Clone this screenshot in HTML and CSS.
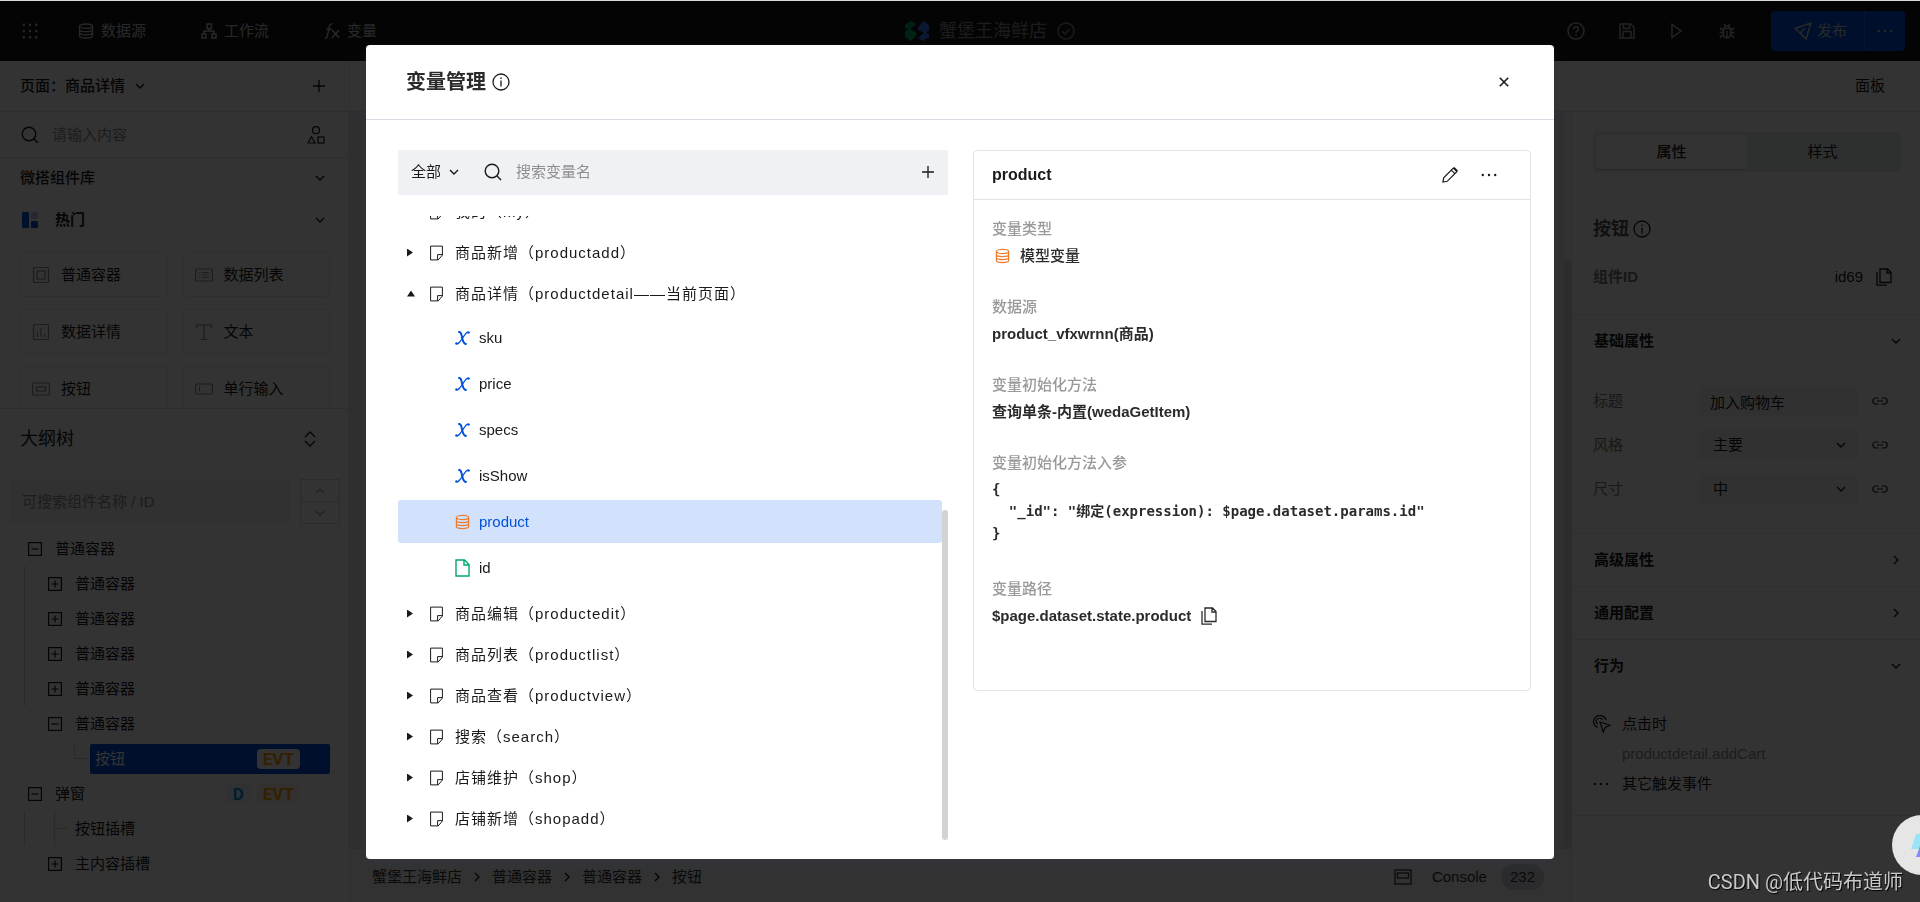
FILE: index.html
```html
<!DOCTYPE html>
<html lang="zh-CN">
<head>
<meta charset="utf-8">
<title>变量管理</title>
<link rel="stylesheet" href="styles.css">
</head>
<body>
<svg class="sprite" aria-hidden="true">
  <symbol id="i-db" viewBox="0 0 16 16"><g fill="none" stroke="currentColor" stroke-width="1.3"><ellipse cx="8" cy="3.2" rx="6.5" ry="2.2"/><path d="M1.5 3.2v9.6c0 1.2 2.9 2.2 6.5 2.2s6.500-1 6.500-2.200V3.200M1.500 6.400c0 1.200 2.900 2.200 6.500 2.200s6.500-1 6.500-2.200M1.500 9.600c0 1.200 2.900 2.200 6.500 2.200s6.500-1 6.500-2.200"/></g></symbol>
  <symbol id="i-flow" viewBox="0 0 16 16"><g fill="none" stroke="currentColor" stroke-width="1.500"><rect x="6" y="1" width="4.500" height="4.500"/><rect x="1" y="11" width="4" height="4"/><rect x="11" y="11" width="4" height="4"/><path d="M8.200 5.500v2.500M3 11V8h10v3"/></g></symbol>
  <symbol id="i-fx" viewBox="0 0 18 18"><g fill="none" stroke="currentColor" stroke-width="1.600"><path d="M9.500 1.200C7.500.6 6.500 1.700 6.100 3.500L3.800 14.500C3.400 16.500 2.500 17.200.8 16.700M2.500 7h6M9 8l8 8.500M17 8l-8 8.500"/></g></symbol>
  <symbol id="i-dots9" viewBox="0 0 16 16"><g fill="currentColor"><circle cx="1.800" cy="1.800" r="1.200"/><circle cx="8" cy="1.800" r="1.200"/><circle cx="14.200" cy="1.800" r="1.200"/><circle cx="1.800" cy="8" r="1.200"/><circle cx="8" cy="8" r="1.200"/><circle cx="14.200" cy="8" r="1.200"/><circle cx="1.800" cy="14.200" r="1.200"/><circle cx="8" cy="14.200" r="1.200"/><circle cx="14.200" cy="14.200" r="1.200"/></g></symbol>
  <symbol id="i-dots" viewBox="0 0 16 16"><g fill="currentColor"><circle cx="1.800" cy="8" r="1.200"/><circle cx="8" cy="8" r="1.200"/><circle cx="14.200" cy="8" r="1.200"/></g></symbol>
  <symbol id="i-check" viewBox="0 0 18 18"><g fill="none" stroke="currentColor" stroke-width="1.500"><circle cx="9" cy="9" r="8"/><path d="M5.200 9.200l2.800 2.700 4.800-5"/></g></symbol>
  <symbol id="i-help" viewBox="0 0 18 18"><g fill="none" stroke="currentColor" stroke-width="1.500"><circle cx="9" cy="9" r="8"/><path d="M6.600 7.200c0-3.300 4.900-3 4.900-.2C11.500 8.800 9 8.800 9 10.800M9 12.200v1.500"/></g></symbol>
  <symbol id="i-save" viewBox="0 0 16 16"><g fill="none" stroke="currentColor" stroke-width="1.500"><path d="M1 1h10.500L15 4.500V15H1zM4.500 1v4.500h6V1M4 15V8.500h8V15"/></g></symbol>
  <symbol id="i-play" viewBox="0 0 16 16"><path d="M3 1.500v13L12 8z" fill="none" stroke="currentColor" stroke-width="1.500"/></symbol>
  <symbol id="i-bug" viewBox="0 0 16 16"><g fill="none" stroke="currentColor" stroke-width="1.400"><path d="M4.500 5.500h7v5.500c0 5-7 5-7 0zM5.500 5.500c0-3.500 5-3.500 5 0M8 8v6.500M.5 9.500h4M11.500 9.500h4M1.500 4.500c0 2 1 2.500 3 2.500M14.500 4.500c0 2-1 2.500-3 2.500M1.500 15c0-2 1-3 3-3M14.500 15c0-2-1-3-3-3M5 .8l1.500 2M11 .8l-1.500 2"/></g></symbol>
  <symbol id="i-plane" viewBox="0 0 18 18"><path d="M1 6.500L17 1l-5 16-4.500-4.500zM7.500 12.500l-.2-3 4-3" fill="none" stroke="currentColor" stroke-width="1.500" stroke-linejoin="round"/></symbol>
  <symbol id="i-down" viewBox="0 0 10 10"><path d="M1 3l4 4 4-4" fill="none" stroke="currentColor" stroke-width="1.400"/></symbol>
  <symbol id="i-up" viewBox="0 0 10 10"><path d="M1 7l4-4 4 4" fill="none" stroke="currentColor" stroke-width="1.400"/></symbol>
  <symbol id="i-right" viewBox="0 0 10 10"><path d="M3 1l4 4-4 4" fill="none" stroke="currentColor" stroke-width="1.400"/></symbol>
  <symbol id="i-plus" viewBox="0 0 12 12"><path d="M6 0v12M0 6h12" fill="none" stroke="currentColor" stroke-width="1.300"/></symbol>
  <symbol id="i-search" viewBox="0 0 18 18"><g fill="none" stroke="currentColor" stroke-width="1.400"><circle cx="8" cy="8" r="6.800"/><path d="M12.800 12.800l4.200 4.200"/></g></symbol>
  <symbol id="i-shapes" viewBox="0 0 18 18"><g fill="none" stroke="currentColor" stroke-width="1.200"><circle cx="9" cy="4.200" r="3.500"/><path d="M1 17l3.500-6.200L8 17z"/><rect x="11" y="11" width="6" height="6"/></g></symbol>
  <symbol id="i-hot" viewBox="0 0 16 16"><rect width="7" height="16" rx="1" fill="#0052d9"/><rect x="9" width="7" height="7" rx="1" fill="#bcc8e8"/><rect x="9" y="9" width="7" height="7" rx="1" fill="#0052d9"/></symbol>
  <symbol id="i-box" viewBox="0 0 18 18"><g fill="none" stroke="currentColor" stroke-width="1.200"><rect x="1.500" y="1.500" width="15" height="15" rx="1"/><rect x="5" y="5" width="8" height="8"/></g></symbol>
  <symbol id="i-list" viewBox="0 0 18 18"><g fill="none" stroke="currentColor" stroke-width="1.200"><rect x=".6" y="3" width="16.800" height="12" rx="1"/><path d="M4 6.500h1.500M7 6.500h7M4 9h1.500M7 9h7M4 11.500h1.500M7 11.500h7"/></g></symbol>
  <symbol id="i-chart" viewBox="0 0 18 18"><g fill="none" stroke="currentColor" stroke-width="1.200"><rect x="1.500" y="1.500" width="15" height="15" rx="1"/><path d="M5.500 8v6M9 5v9M12.500 10.500V14"/></g></symbol>
  <symbol id="i-text" viewBox="0 0 18 18"><path d="M1.500 5V2h15v3M9 2v14.500M5.500 16.500h7" fill="none" stroke="currentColor" stroke-width="1.200"/></symbol>
  <symbol id="i-btn" viewBox="0 0 18 18"><g fill="none" stroke="currentColor" stroke-width="1.200"><rect x=".6" y="3" width="16.800" height="12" rx="1"/><rect x="4.500" y="7" width="9" height="4"/></g></symbol>
  <symbol id="i-input" viewBox="0 0 18 18"><g fill="none" stroke="currentColor" stroke-width="1.200"><rect x=".6" y="4" width="16.800" height="10" rx="1"/><path d="M4.500 6.500v5"/></g></symbol>
  <symbol id="i-updown" viewBox="0 0 12 16"><path d="M1 6l5-5 5 5M1 10l5 5 5-5" fill="none" stroke="currentColor" stroke-width="1.400"/></symbol>
  <symbol id="i-minusbox" viewBox="0 0 14 14"><g fill="none" stroke="currentColor" stroke-width="1.200"><rect x=".6" y=".6" width="12.800" height="12.800"/><path d="M3.500 7h7"/></g></symbol>
  <symbol id="i-plusbox" viewBox="0 0 14 14"><g fill="none" stroke="currentColor" stroke-width="1.200"><rect x=".6" y=".6" width="12.800" height="12.800"/><path d="M3.500 7h7M7 3.500v7"/></g></symbol>
  <symbol id="i-info" viewBox="0 0 18 18"><g fill="none" stroke="currentColor" stroke-width="1.300"><circle cx="9" cy="9" r="8"/><path d="M9 7.500V13.500M9 4.500v1.500"/></g></symbol>
  <symbol id="i-copy" viewBox="0 0 16 18"><path d="M4 1h7.500L15 4.500V14.500H4zM11 1v4h4M1 4v13.200h10" fill="none" stroke="currentColor" stroke-width="1.300"/></symbol>
  <symbol id="i-link" viewBox="0 0 16 8"><path d="M6.500 1H3.800a3 3 0 0 0 0 6h2.700M9.500 1h2.700a3 3 0 0 1 0 6H9.500M5 4h6" fill="none" stroke="currentColor" stroke-width="1.200"/></symbol>
  <symbol id="i-click" viewBox="0 0 18 18"><g fill="none" stroke="currentColor" stroke-width="1.200"><path d="M7 7l10 3.200-4.500 2L10.200 17zM4.500 12.500A6.300 6.300 0 1 1 13 5M5 9.200A3.300 3.300 0 1 1 9.500 4.800"/></g></symbol>
  <symbol id="i-page" viewBox="0 0 13 16"><path d="M.6 1.100h11.800v9L8.200 14.900H.6zM12.400 9.600H7.600v5.300" fill="none" stroke="currentColor" stroke-width="1"/></symbol>
  <symbol id="i-x" viewBox="0 0 15 15"><g fill="none" stroke="currentColor" stroke-linecap="round"><path d="M4 1.600C6 1.200 6.300 3.500 7.100 7.200S8.700 13.600 11 13.400" stroke-width="2"/><path d="M14 1.900C11.800.9 10.300 3.300 7.600 7.500S3.200 14.100 1 13.100" stroke-width="1.200"/></g><circle cx="13.500" cy="2.100" r="1.200" fill="currentColor"/><circle cx="1.500" cy="12.900" r="1.200" fill="currentColor"/></symbol>
  <symbol id="i-file" viewBox="0 0 15 18"><path d="M1 1h8.500L14 5.500V17H1zM9 1v5h5" fill="none" stroke="currentColor" stroke-width="1.400"/></symbol>
  <symbol id="i-close" viewBox="0 0 10 10"><path d="M.8.800l8.400 8.400M9.200.8L.8 9.200" fill="none" stroke="currentColor" stroke-width="1.600"/></symbol>
  <symbol id="i-pencil" viewBox="0 0 16 16"><path d="M.9 15.100l.8-4.300L11.300 1.200l3.500 3.500L5.200 14.300zM9.300 3.200l3.500 3.500M12 .5L15.500 4" fill="none" stroke="currentColor" stroke-width="1.200"/></symbol>
  <symbol id="i-console" viewBox="0 0 18 16"><g fill="none" stroke="currentColor" stroke-width="1.300"><rect x="1" y="1" width="16" height="14"/><rect x="3.500" y="4" width="11" height="5"/></g></symbol>
</svg>

<div class="app">
  <header class="topbar">
    <button class="apps" aria-label="应用"><svg class="s16"><use href="#i-dots9"/></svg></button>
    <nav class="topnav">
      <a href="#"><svg class="s16"><use href="#i-db"/></svg>数据源</a>
      <a href="#"><svg class="s16"><use href="#i-flow"/></svg>工作流</a>
      <a href="#"><svg class="s16"><use href="#i-fx"/></svg>变量</a>
    </nav>
    <div class="app-title">
      <svg class="logo" viewBox="0 0 24 20"><path d="M0 4L6 0l5 3-6 5 5 3 1.500-.5v3.500L6 20l-6-4v-5l3-3-3-1z" fill="#00a870"/><path d="M24 16l-6 4-5-3 6-5-5-3-1 .5V7l5-7 6 4v5l-3 3 3 1z" fill="#3f7bf5"/></svg>
      <span>蟹堡王海鲜店</span>
      <svg class="s18"><use href="#i-check"/></svg>
    </div>
    <div class="top-actions">
      <button aria-label="帮助"><svg class="s18"><use href="#i-help"/></svg></button>
      <button aria-label="保存"><svg class="s16"><use href="#i-save"/></svg></button>
      <button aria-label="预览"><svg class="s16"><use href="#i-play"/></svg></button>
      <button aria-label="调试"><svg class="s16"><use href="#i-bug"/></svg></button>
    </div>
    <div class="publish">
      <button class="publish-main"><svg class="s18"><use href="#i-plane"/></svg>发布</button>
      <button class="publish-more" aria-label="更多"><svg class="s16"><use href="#i-dots"/></svg></button>
    </div>
  </header>

  <div class="toolbar">
    <div class="page-pick">
      <button class="page-name">页面：商品详情<svg class="s10"><use href="#i-down"/></svg></button>
      <button aria-label="新增页面"><svg class="s12"><use href="#i-plus"/></svg></button>
    </div>
    <button class="panel-link">面板</button>
  </div>

  <div class="workspace">
    <aside class="left">
      <div class="lib-search">
        <svg class="s18"><use href="#i-search"/></svg>
        <input type="text" placeholder="请输入内容" aria-label="搜索组件">
        <svg class="s18"><use href="#i-shapes"/></svg>
      </div>
      <section class="library">
        <h3 class="lib-head">微搭组件库<svg class="s10"><use href="#i-down"/></svg></h3>
        <h4 class="lib-head sub"><svg class="s16"><use href="#i-hot"/></svg><span class="hot">热门</span><svg class="s10"><use href="#i-down"/></svg></h4>
        <div class="cards">
          <button class="card"><svg class="s18"><use href="#i-box"/></svg>普通容器</button>
          <button class="card"><svg class="s18"><use href="#i-list"/></svg>数据列表</button>
          <button class="card"><svg class="s18"><use href="#i-chart"/></svg>数据详情</button>
          <button class="card"><svg class="s18"><use href="#i-text"/></svg>文本</button>
          <button class="card"><svg class="s18"><use href="#i-btn"/></svg>按钮</button>
          <button class="card"><svg class="s18"><use href="#i-input"/></svg>单行输入</button>
        </div>
      </section>
      <section class="outline">
        <h3 class="outline-head">大纲树<svg class="updown"><use href="#i-updown"/></svg></h3>
        <div class="outline-search">
          <input type="text" placeholder="可搜索组件名称 / ID" aria-label="搜索大纲">
          <div class="stepper">
            <button aria-label="上一个"><svg class="s10"><use href="#i-up"/></svg></button>
            <button aria-label="下一个"><svg class="s10"><use href="#i-down"/></svg></button>
          </div>
        </div>
        <ul class="otree">
          <li class="l1"><svg class="s14"><use href="#i-minusbox"/></svg>普通容器</li>
          <li class="l2"><i class="guide"></i><svg class="s14"><use href="#i-plusbox"/></svg>普通容器</li>
          <li class="l2"><i class="guide"></i><svg class="s14"><use href="#i-plusbox"/></svg>普通容器</li>
          <li class="l2"><i class="guide"></i><svg class="s14"><use href="#i-plusbox"/></svg>普通容器</li>
          <li class="l2"><i class="guide"></i><svg class="s14"><use href="#i-plusbox"/></svg>普通容器</li>
          <li class="l2"><i class="guide none"></i><svg class="s14"><use href="#i-minusbox"/></svg>普通容器</li>
          <li class="l3"><i class="elbow"></i><div class="picked"><span>按钮</span><b class="evt light">EVT</b></div></li>
          <li class="l1"><svg class="s14"><use href="#i-minusbox"/></svg><span>弹窗</span><b class="dtag">D</b><b class="evt">EVT</b></li>
          <li class="l2"><i class="guide wide"></i><i class="branch"></i>按钮插槽</li>
          <li class="l2"><i class="guide none"></i><svg class="s14"><use href="#i-plusbox"/></svg>主内容插槽</li>
        </ul>
      </section>
    </aside>

    <main class="center">
      <div class="canvas"><div class="canvas-scroll"></div></div>
      <footer class="crumbs">
        <a href="#">蟹堡王海鲜店</a><svg class="s10"><use href="#i-right"/></svg>
        <a href="#">普通容器</a><svg class="s10"><use href="#i-right"/></svg>
        <a href="#">普通容器</a><svg class="s10"><use href="#i-right"/></svg>
        <a href="#">按钮</a>
        <button class="console"><svg class="s18"><use href="#i-console"/></svg>Console<span class="count">232</span></button>
      </footer>
    </main>

    <aside class="right">
      <div class="tabs"><button class="tab on">属性</button><button class="tab">样式</button></div>
      <h2 class="comp">按钮<svg class="s18"><use href="#i-info"/></svg></h2>
      <div class="comp-id"><strong>组件ID</strong><span>id69</span><button aria-label="复制"><svg class="copy"><use href="#i-copy"/></svg></button></div>
      <section class="group">
        <h3>基础属性<svg class="s10"><use href="#i-down"/></svg></h3>
        <div class="fields">
          <label for="f1">标题</label><input id="f1" type="text" value="加入购物车"><button aria-label="绑定标题"><svg class="link"><use href="#i-link"/></svg></button>
          <label for="f2">风格</label><span class="sel"><select id="f2"><option>主要</option></select><svg class="s10"><use href="#i-down"/></svg></span><button aria-label="绑定风格"><svg class="link"><use href="#i-link"/></svg></button>
          <label for="f3">尺寸</label><span class="sel"><select id="f3"><option>中</option></select><svg class="s10"><use href="#i-down"/></svg></span><button aria-label="绑定尺寸"><svg class="link"><use href="#i-link"/></svg></button>
        </div>
      </section>
      <section class="group"><h3>高级属性<svg class="s10"><use href="#i-right"/></svg></h3></section>
      <section class="group"><h3>通用配置<svg class="s10"><use href="#i-right"/></svg></h3></section>
      <section class="group last">
        <h3>行为<svg class="s10"><use href="#i-down"/></svg></h3>
        <div class="events">
          <svg class="s18"><use href="#i-click"/></svg><span>点击时</span>
          <i></i><span class="dim">productdetail.addCart</span>
          <svg class="s16"><use href="#i-dots"/></svg><span>其它触发事件</span>
        </div>
      </section>
    </aside>
  </div>
</div>

<div class="mask">
  <div class="modal" role="dialog" aria-labelledby="dlg">
    <header class="modal-head">
      <h1 id="dlg">变量管理</h1><svg class="s18"><use href="#i-info"/></svg>
      <button class="close" aria-label="关闭"><svg class="s10"><use href="#i-close"/></svg></button>
    </header>
    <div class="modal-body">
      <section class="vars">
        <div class="var-bar">
          <span class="scope"><select aria-label="范围"><option>全部</option></select><svg class="s10"><use href="#i-down"/></svg></span>
          <svg class="s18"><use href="#i-search"/></svg>
          <input type="text" placeholder="搜索变量名" aria-label="搜索变量名">
          <button aria-label="新增变量"><svg class="s12"><use href="#i-plus"/></svg></button>
        </div>
        <div class="var-pane">
          <ul class="vtree">
            <li class="pg"><i class="tri"></i><svg class="page"><use href="#i-page"/></svg>我的（my）</li>
            <li class="pg"><i class="tri"></i><svg class="page"><use href="#i-page"/></svg>商品新增（productadd）</li>
            <li class="pg"><i class="tri open"></i><svg class="page"><use href="#i-page"/></svg>商品详情（productdetail——当前页面）</li>
            <li class="kids">
              <button class="var"><svg class="vx"><use href="#i-x"/></svg>sku</button>
              <button class="var"><svg class="vx"><use href="#i-x"/></svg>price</button>
              <button class="var"><svg class="vx"><use href="#i-x"/></svg>specs</button>
              <button class="var"><svg class="vx"><use href="#i-x"/></svg>isShow</button>
              <button class="var on"><svg class="vdb"><use href="#i-db"/></svg>product</button>
              <button class="var"><svg class="vfile"><use href="#i-file"/></svg>id</button>
            </li>
            <li class="pg"><i class="tri"></i><svg class="page"><use href="#i-page"/></svg>商品编辑（productedit）</li>
            <li class="pg"><i class="tri"></i><svg class="page"><use href="#i-page"/></svg>商品列表（productlist）</li>
            <li class="pg"><i class="tri"></i><svg class="page"><use href="#i-page"/></svg>商品查看（productview）</li>
            <li class="pg"><i class="tri"></i><svg class="page"><use href="#i-page"/></svg>搜索（search）</li>
            <li class="pg"><i class="tri"></i><svg class="page"><use href="#i-page"/></svg>店铺维护（shop）</li>
            <li class="pg"><i class="tri"></i><svg class="page"><use href="#i-page"/></svg>店铺新增（shopadd）</li>
          </ul>
          <div class="thumb"></div>
        </div>
      </section>
      <section class="detail">
        <header class="detail-head">
          <h2>product</h2>
          <button aria-label="编辑"><svg class="s16"><use href="#i-pencil"/></svg></button>
          <button aria-label="更多"><svg class="s16"><use href="#i-dots"/></svg></button>
        </header>
        <dl class="facts">
          <dt>变量类型</dt><dd class="kind"><svg class="vdb"><use href="#i-db"/></svg>模型变量</dd>
          <dt>数据源</dt><dd>product_vfxwrnn(商品)</dd>
          <dt>变量初始化方法</dt><dd>查询单条-内置(wedaGetItem)</dd>
          <dt>变量初始化方法入参</dt><dd class="code"><pre>{
  "_id": "绑定(expression): $page.dataset.params.id"
}</pre></dd>
          <dt>变量路径</dt><dd class="path">$page.dataset.state.product<button aria-label="复制路径"><svg class="copy"><use href="#i-copy"/></svg></button></dd>
        </dl>
      </section>
    </div>
  </div>
</div>

<button class="assistant" aria-label="助手"><svg viewBox="0 0 60 60"><path d="M24 19h22l-4 15H19z" fill="#9be4f7"/><path d="M27 34l2-7h20l-4 15H24z" fill="#8188fa"/></svg></button>
<div class="watermark">CSDN @低代码布道师</div>
</body>
</html>
```
FILE: styles.css
```css
* { box-sizing: border-box; margin: 0; padding: 0; }
html, body { height: 100%; overflow: hidden; }
body {
  font: 15px/20px "Liberation Sans", "Noto Sans CJK SC", sans-serif;
  color: #1a1a1a;
  background: #dcdcdc;
}
button, input, select { font: inherit; color: inherit; background: none; border: 0; outline: 0; appearance: none; }
button { display: inline-flex; align-items: center; }
a { color: inherit; text-decoration: none; }
ul { list-style: none; }
h1, h2, h3, h4 { font-size: 15px; font-weight: 500; }
input { min-width: 0; }
svg { flex: none; display: block; }
.sprite { position: absolute; width: 0; height: 0; }
.s10 { width: 10px; height: 10px; }
.s12 { width: 12px; height: 12px; }
.s14 { width: 14px; height: 14px; }
.s16 { width: 16px; height: 16px; }
.s18 { width: 18px; height: 18px; }

.app { height: 100%; padding-top: 1px; display: flex; flex-direction: column; }

/* top bar */
.topbar { flex: none; height: 60px; display: flex; align-items: center; padding: 0 15px 0 22px; background: #171717; color: #c8c8c8; }
.topnav { display: flex; gap: 55px; margin-left: 40px; }
.topnav a { display: flex; align-items: center; gap: 7px; }
.app-title { display: flex; align-items: center; gap: 10px; margin: 0 auto; font-size: 18px; color: #8a8a8a; padding-left: 36px; }
.logo { width: 24px; height: 20px; }
.top-actions { display: flex; gap: 34px; margin-right: 36px; color: #b0b0b0; }
.publish { display: flex; height: 40px; border-radius: 4px; background: #0052d9; overflow: hidden; }
.publish-main { gap: 5px; padding: 0 17px 0 23px; }
.publish-more { padding: 0 12px; border-left: 1px solid #2b6ee0; }

/* page toolbar */
.toolbar { flex: none; height: 51px; display: flex; justify-content: space-between; background: #fff; border-bottom: 1px solid #e4e4e4; }
.page-pick { width: 350px; display: flex; align-items: center; justify-content: space-between; padding: 0 24px 0 20px; border-right: 1px solid #e8e8e8; }
.page-name { gap: 10px; font-weight: 500; }
.panel-link { padding-right: 35px; }

.workspace { flex: 1; min-height: 0; display: flex; }

/* component library and outline */
.left { flex: none; width: 348px; display: flex; flex-direction: column; background: #fff; }
.lib-search { flex: none; height: 47px; display: flex; align-items: center; gap: 13px; padding: 0 23px 0 21px; border-bottom: 2px solid #e8e8e8; }
.lib-search input { flex: 1; }
input::placeholder { color: #8f8f8f; opacity: 1; }
.library { flex: 0 0 249px; overflow: hidden; padding: 0 18px 0 20px; }
.lib-head { height: 38px; display: flex; align-items: center; justify-content: space-between; padding-right: 5px; }
.lib-head.sub { height: 46px; padding-left: 2px; }
.hot { flex: 1; margin-left: 17px; font-weight: 700; }
.cards { display: grid; grid-template-columns: 1fr 1fr; gap: 12px 15px; margin-top: 9px; }
.card { height: 45px; gap: 11px; padding-left: 11px; border: 1px solid #e8e8e8; border-radius: 4px; }
.card svg { color: #8a93a0; }
.outline { flex: 1; min-height: 0; overflow: hidden; border-top: 1px solid #e0e0e0; }
.outline-head { height: 60px; display: flex; align-items: center; justify-content: space-between; padding: 0 32px 0 20px; font-size: 18px; font-weight: 400; }
.updown { width: 12px; height: 16px; }
.outline-search { display: flex; gap: 10px; margin: 10px 8px 7px 10px; height: 45px; }
.outline-search input { flex: 1; padding: 0 12px; background: #f3f3f3; border-radius: 4px; }
.stepper { width: 40px; display: grid; border: 1px solid #dcdcdc; color: #a8a8a8; }
.stepper button { justify-content: center; }
.stepper button + button { border-top: 1px solid #dcdcdc; }
.otree li { height: 35px; display: flex; align-items: center; gap: 13px; }
.l1 { padding-left: 28px; }
.l2 { padding-left: 24px; }
.guide { width: 25px; align-self: stretch; border-left: 1px solid #d0d0d0; margin-right: -14px; }
.guide.none { border-color: transparent; }
.guide.wide { width: 30px; margin-right: -13px; }
.branch { align-self: stretch; width: 14px; margin-right: -6px; border-left: 1px solid #d0d0d0; background: linear-gradient(#d0d0d0, #d0d0d0) center / 100% 1px no-repeat; }
.l3 { padding-left: 74px; }
.elbow { width: 14px; height: 18px; margin-right: -11px; align-self: flex-start; border-left: 1px solid #d0d0d0; border-bottom: 1px solid #d0d0d0; }
.picked { flex: 1; height: 30px; margin-right: 18px; padding: 0 30px 0 5px; display: flex; align-items: center; justify-content: space-between; background: #0052d9; border-radius: 2px; color: #fff; }
.evt, .dtag { font: 700 17px/20px Roboto, sans-serif; padding: 0 6px; border-radius: 4px; color: #ffa000; background: #fbf3e8; }
.evt.light { background: #fff; }
.l1 .evt { margin-left: -7px; margin-right: 48px; }
.dtag { margin-left: auto; padding: 0 7px; color: #0096d9; background: #eef5fb; }

/* canvas */
.center { flex: 1; min-width: 0; display: flex; flex-direction: column; }
.canvas { flex: 1; background: #ebebec; border-right: 7px solid #fafafa; position: relative; }
.canvas-scroll { position: absolute; right: -7px; top: 20%; bottom: 0; width: 7px; border-radius: 4px; background: #d9d9d9; }
.crumbs { flex: none; height: 54px; display: flex; align-items: center; gap: 10px; padding: 2px 27px 0 24px; background: #f8f8f8; border-top: 1px solid #e4e4e4; }
.crumbs a { color: #333; }
.console { margin-left: auto; gap: 20px; color: #333; }
.count { margin-left: -6px; padding: 3px 9px; border-radius: 14px; line-height: 20px; background: #d5d8e2; }

/* property panel */
.right { flex: none; width: 349px; background: #fff; border-left: 1px solid #e6e6e6; }
.tabs { display: grid; grid-template-columns: 1fr 1fr; height: 40px; margin: 20px 19px 0 21px; padding: 3px; border-radius: 5px; background: #e6e8ec; }
.tab { justify-content: center; }
.tab.on { background: #fff; border-radius: 3px; font-weight: 500; box-shadow: 0 1px 1px #c4c6ca; }
.comp { display: flex; align-items: center; gap: 4px; height: 30px; margin: 42px 21px 0; font-size: 18px; font-weight: 700; color: #555; }
.comp svg { color: #1a1a1a; }
.comp-id { display: flex; align-items: center; margin: 17px 28px 22px 21px; height: 31px; }
.comp-id strong { flex: 1; color: #777; }
.comp-id button { margin-left: 13px; }
.copy { width: 16px; height: 18px; }
.group { border-top: 1px solid #e4e4e4; }
.group h3 { display: flex; align-items: center; justify-content: space-between; height: 52px; padding: 0 19px 0 22px; font-weight: 700; }
.fields { display: grid; grid-template-columns: 106px 1fr 16px; align-items: center; gap: 14px 0; padding: 19px 32px 29px 21px; }
.fields label { color: #777; }
.fields input, .sel select { width: 100%; height: 30px; padding: 0 11px; border-radius: 4px; background: #f3f3f3; }
.sel select { padding: 0 14px; }
.fields input, .sel { margin-right: 14px; }
.fields input { width: auto; }
.sel { position: relative; }
.sel svg { position: absolute; right: 12px; top: 10px; pointer-events: none; }
.link { width: 16px; height: 8px; }
.last { border-bottom: 1px solid #e4e4e4; }
.events { display: grid; grid-template-columns: 18px 1fr; gap: 10px 11px; align-items: center; padding: 22px 21px 21px; }
.dim { color: #8f8f8f; }

/* dialog */
.mask { position: fixed; inset: 1px 0 0; display: flex; justify-content: center; padding: 44px 24px 43px; background: rgba(0, 0, 0, .8); }
.modal { width: 100%; max-width: 1188px; height: 100%; display: flex; flex-direction: column; background: #fff; border-radius: 4px; box-shadow: 0 4px 12px rgba(54, 58, 80, .32); }
.modal-head { flex: none; height: 75px; display: flex; align-items: center; gap: 6px; padding: 0 45px 0 40px; border-bottom: 1px solid #d9dae4; }
.modal-head h1 { font-size: 20px; line-height: 28px; font-weight: 700; color: #2b2b2b; }
.close { margin-left: auto; }
.modal-body { flex: 1; min-height: 0; display: grid; grid-template-columns: minmax(0, 550fr) minmax(0, 558fr); gap: 25px; padding: 30px 23px 17px 32px; }
.vars { min-height: 0; display: flex; flex-direction: column; }
.var-bar { flex: none; height: 45px; display: flex; align-items: center; gap: 14px; padding: 0 14px 2px 13px; background: #f0f1f5; }
.scope { display: flex; align-items: center; gap: 7px; margin-right: 11px; }
.var-bar input { flex: 1; }
.var-pane { flex: 1; min-height: 0; margin-top: 21px; overflow: hidden; position: relative; }
.vtree { margin: -25px 6px 0 0; }
.pg { height: 41px; display: flex; align-items: center; padding-left: 9px; letter-spacing: 1px; text-spacing-trim: space-all; }
.tri { width: 6px; height: 8px; margin-right: 17px; background: #1a1a1a; clip-path: polygon(0 0, 100% 50%, 0 100%); }
.tri.open { width: 8px; height: 6px; margin-right: 15px; clip-path: polygon(0 100%, 50% 0, 100% 100%); }
.page { width: 13px; height: 16px; margin-right: 12px; }
.kids { display: grid; gap: 3px; margin: 2px 0 4px; }
.var { width: 100%; height: 43px; padding-left: 57px; gap: 9px; border-radius: 3px; }
.var.on { color: #0052d9; background: #d2e2fc; }
.vx, .vdb { width: 15px; height: 16px; }
.vx { color: #0052d9; }
.vdb { color: #ed7b2f; }
.vfile { width: 15px; height: 18px; color: #00a870; }
.thumb { position: absolute; right: 0; bottom: 2px; width: 6px; height: 330px; border-radius: 3px; background: #d3d3d3; }

.detail { align-self: start; border: 1px solid #e3e4ea; border-radius: 4px; }
.detail-head { height: 49px; display: flex; align-items: center; gap: 23px; padding: 0 33px 0 18px; border-bottom: 1px solid #e3e4ea; }
.detail-head h2 { flex: 1; font-size: 16px; font-weight: 700; }
.facts { padding: 15px 18px 37px; line-height: 27px; }
.facts dt { color: #999; font-weight: 500; }
.facts dd { margin-bottom: 24px; font-weight: 700; color: #2b2b2b; }
.facts .kind { display: flex; align-items: center; gap: 10px; padding-left: 3px; font-weight: 500; }
.facts .code { padding-top: 2px; margin-bottom: 31px; }
.code pre { font: 700 14px/22px "DejaVu Sans Mono", "Noto Sans CJK SC", monospace; overflow: hidden; }
.path { display: flex; align-items: center; gap: 10px; }

/* floating items */
.assistant { position: fixed; right: -32px; bottom: 27px; width: 60px; height: 60px; border-radius: 50%; background: #e6e6e6; }
.assistant svg { width: 60px; height: 60px; }
.watermark { position: fixed; right: 17px; bottom: 6px; font: 20px/28px Roboto, "Noto Sans CJK SC", sans-serif; color: #c9c9c9; text-shadow: 1px 1px 1px #000; }
```
